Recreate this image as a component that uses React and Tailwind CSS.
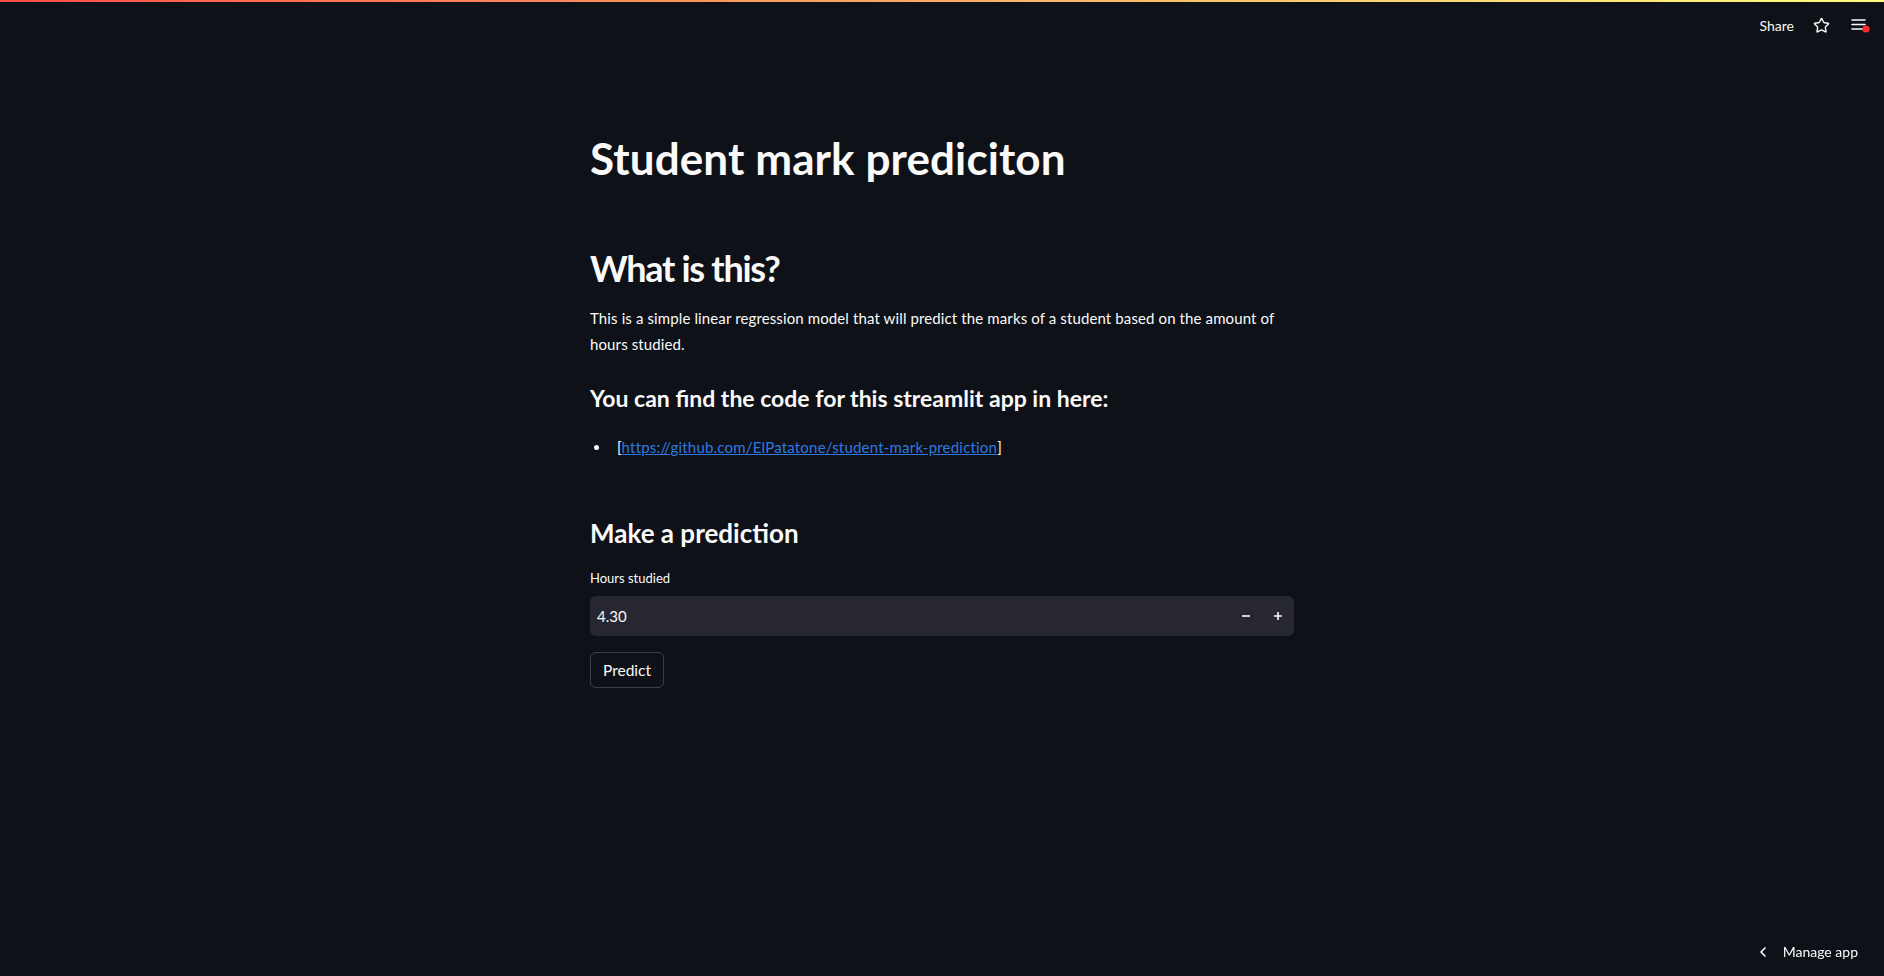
import React, { useState } from 'react';
import { Star, ChevronLeft } from 'lucide-react';

function MenuIcon() {
  return (
    <svg width="20" height="20" viewBox="0 0 20 20" fill="none">
      <path d="M2 5h13M2 9.5h13M2 14h11" stroke="#fafafa" strokeWidth="1.6" strokeLinecap="round" />
      <circle cx="16" cy="14" r="3.6" fill="#ff2b2b" />
    </svg>
  );
}

function StepIcon({ plus }) {
  return (
    <svg width="10" height="10" viewBox="0 0 10 10" fill="none">
      <path d={plus ? 'M1 5h8M5 1v8' : 'M1 5h8'} stroke="#fafafa" strokeWidth="1.6" />
    </svg>
  );
}

export default function App() {
  const [hours, setHours] = useState(4.3);

  return (
    <div className="min-h-screen bg-[#0e1117] text-[#fafafa] font-['Lato','Open_Sans',sans-serif]">
      {/* top decoration */}
      <div className="h-[2px] bg-gradient-to-r from-[#ff4b4b] to-[#fffd80]" />

      {/* header */}
      <div className="flex h-[46px] items-center justify-end pr-[14px]">
        <span className="mr-[19px] text-[14px] font-normal">Share</span>
        <Star className="mr-[20px] h-[17px] w-[17px]" strokeWidth={2} />
        <MenuIcon />
      </div>

      {/* main content */}
      <div className="mx-auto w-[704px] pt-[84px]">
        <h1 className="text-[44px] font-bold leading-[1.2] tracking-[0.1px]">Student mark prediciton</h1>

        <h2 className="mt-[62px] text-[36px] font-bold leading-[1.2] tracking-[-1.3px]">What is this?</h2>
        <p className="mt-[16px] text-[15px] leading-[25.6px] tracking-[0.12px] text-[#fafafa]">
          This is a simple linear regression model that will predict the marks of a student based on the amount of hours studied.
        </p>

        <h4 className="mt-[27px] text-[23px] font-bold leading-[1.3]">You can find the code for this streamlit app in here:</h4>
        <ul className="mt-[21px] text-[15px] leading-[25.6px]">
          <li className="flex items-center">
            <span className="ml-[4px] mr-[18px] h-[5px] w-[5px] rounded-full bg-[#fafafa]" />
            <span>
              [<a href="#" className="tracking-[0.2px] text-[#2f79e0] underline">https://github.com/ElPatatone/student-mark-prediction</a>]
            </span>
          </li>
        </ul>

        <h3 className="mt-[56px] text-[26px] font-bold leading-[1.3]">Make a prediction</h3>

        <label className="mt-[18px] block text-[13px] leading-[20px]">Hours studied</label>
        <div className="mt-[8px] flex h-[40px] items-center rounded-[6px] bg-[#262730]">
          <span className="flex-1 pl-[7px] text-[15px]">{hours.toFixed(2)}</span>
          <button className="flex h-full w-[32px] items-center justify-center" onClick={() => setHours(h => h - 0.01)}>
            <StepIcon />
          </button>
          <button className="flex h-full w-[32px] items-center justify-center" onClick={() => setHours(h => h + 0.01)}>
            <StepIcon plus />
          </button>
        </div>

        <button className="mt-[16px] h-[36px] rounded-[6px] border border-[#fafafa]/20 px-[12px] text-[15.5px]">Predict</button>
      </div>

      {/* manage app */}
      <div className="fixed bottom-[14px] right-[26px] flex items-center text-[14px]">
        <ChevronLeft className="mr-[12px] h-[16px] w-[16px]" strokeWidth={2.5} />
        Manage app
      </div>
    </div>
  );
}
